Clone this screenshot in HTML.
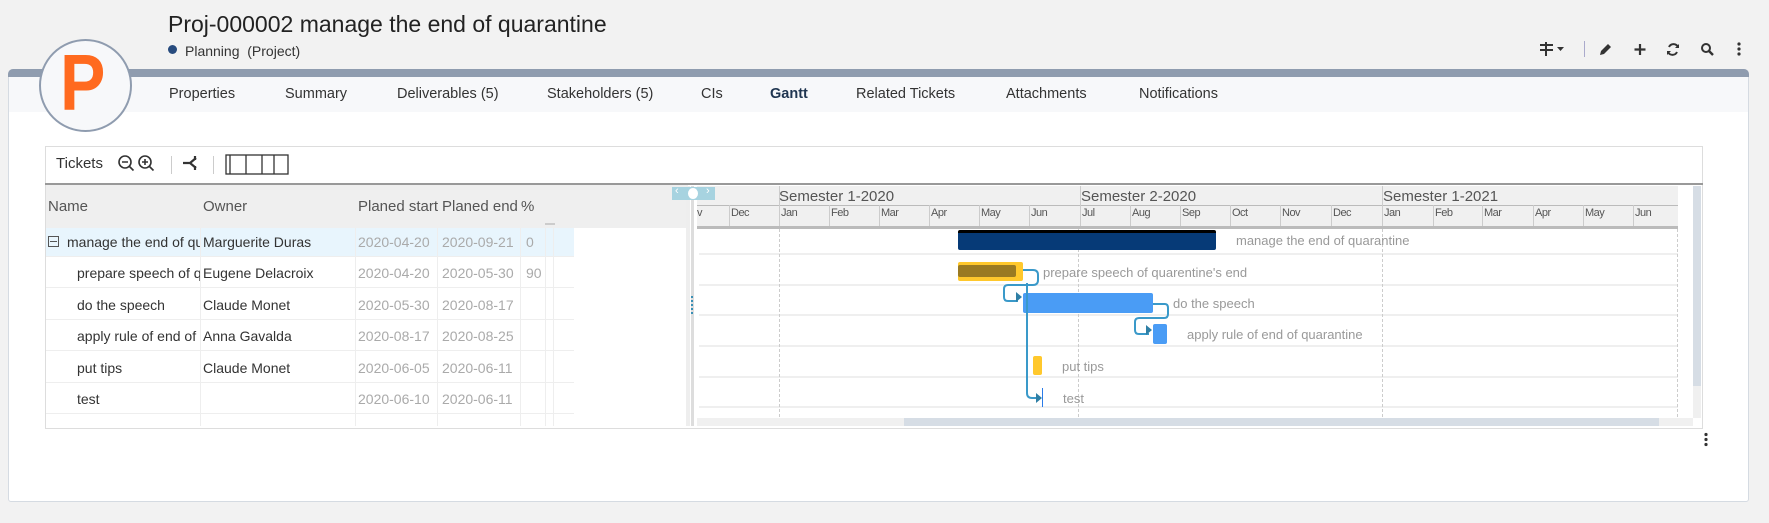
<!DOCTYPE html>
<html><head><meta charset="utf-8"><style>
*{margin:0;padding:0;box-sizing:border-box}
body{width:1769px;height:523px;background:#f2f2f2;font-family:"Liberation Sans",sans-serif;position:relative;overflow:hidden;color:#333}
.a{position:absolute}
.tab{position:absolute;top:86px;font-size:14.5px;color:#333}
.g{font-size:14px;position:absolute;white-space:nowrap;overflow:hidden}
.d{color:#aaa}
.hl{position:absolute;left:699px;width:979px;height:2px;background:#efefef}
.mo{position:absolute;top:207px;font-size:11px;color:#555;letter-spacing:-.5px}
.ml{position:absolute;top:205px;width:1px;height:21px;background:#ccc}
.sem{position:absolute;top:188px;font-size:15px;color:#555}
.lbl{position:absolute;font-size:13px;color:#999}
</style></head><body>
<div class="a" style="left:168px;top:11px;font-size:23px;color:#222">Proj-000002 manage the end of quarantine</div>
<div class="a" style="left:168px;top:45px;width:9px;height:9px;border-radius:50%;background:#274b7e"></div>
<div class="a" style="left:185px;top:43px;font-size:14px;color:#333">Planning&nbsp; (Project)</div>
<svg class="a" style="left:1535px;top:40px" width="225" height="18" viewBox="0 0 225 18">
<g fill="#333">
<rect x="5" y="4" width="13" height="2"/><rect x="5" y="9" width="13" height="2"/><rect x="10" y="2" width="2" height="14"/>
<path d="M22 7h7l-3.5 4z"/>
</g>
<rect x="49" y="1" width="1" height="16" fill="#aac"/>
<path d="M65 15l1-4 7-7 3 3-7 7z" fill="#333"/>
<path d="M105 4v11M99.5 9.5h11" stroke="#333" stroke-width="2.2"/>
<path d="M143 7a5 5 0 0 0-9 0M133 12a5 5 0 0 0 9 0" stroke="#333" stroke-width="2" fill="none"/><path d="M144 4v4h-4zM132 15v-4h4z" fill="#333"/>
<circle cx="171" cy="8" r="4" stroke="#333" stroke-width="2" fill="none"/><path d="M174 11l4 4" stroke="#333" stroke-width="2.4"/>
<circle cx="204" cy="4" r="1.6" fill="#333"/><circle cx="204" cy="9" r="1.6" fill="#333"/><circle cx="204" cy="14" r="1.6" fill="#333"/>
</svg>
<div class="a" style="left:8px;top:69px;width:1741px;height:433px;background:#fff;border:1px solid #d5dbe2;border-radius:5px 5px 3px 3px"></div>
<div class="a" style="left:8px;top:69px;width:1741px;height:8px;background:#8f9caf;border-radius:5px 5px 0 0"></div>
<div class="a" style="left:9px;top:77px;width:1739px;height:35px;background:#f7f8fa"></div>
<div class="tab" style="left:169px">Properties</div>
<div class="tab" style="left:285px">Summary</div>
<div class="tab" style="left:397px">Deliverables (5)</div>
<div class="tab" style="left:547px">Stakeholders (5)</div>
<div class="tab" style="left:701px">CIs</div>
<div class="tab" style="left:770px;font-weight:bold;color:#1f3550">Gantt</div>
<div class="tab" style="left:856px">Related Tickets</div>
<div class="tab" style="left:1006px">Attachments</div>
<div class="tab" style="left:1139px">Notifications</div>
<div class="a" style="left:39px;top:39px;width:93px;height:93px;border-radius:50%;background:#f7f8fa;border:2px solid #8f9caf"></div>
<div class="a" style="left:60px;top:38px;font-size:80px;line-height:90px;font-weight:bold;color:#ff6a1f;transform:scaleX(0.85);transform-origin:left">P</div>
<!-- gantt container -->
<div class="a" style="left:45px;top:146px;width:1658px;height:283px;border:1px solid #ddd;background:#fff"></div>
<div class="a" style="left:45px;top:183px;width:1658px;height:2px;background:#999"></div>
<div class="a" style="left:56px;top:155px;font-size:15px;color:#333">Tickets</div>
<svg class="a" style="left:116px;top:153px" width="180" height="24" viewBox="0 0 180 24">
<g stroke="#333" stroke-width="1.6" fill="none">
<circle cx="9" cy="9" r="6"/><path d="M13.5 13.5l4 4M6 9h6"/>
<circle cx="29" cy="9" r="6"/><path d="M33.5 13.5l4 4M26 9h6M29 6v6"/>
</g>
<rect x="55" y="3" width="1" height="18" fill="#ccc"/>
<path d="M67 10h8M80 5l-6 5 6 5M79 3v4M79 13v4" stroke="#333" stroke-width="2.2" fill="none"/>
<rect x="97" y="3" width="1" height="18" fill="#ccc"/>
<g stroke="#333" stroke-width="1.3" fill="none"><rect x="110" y="2" width="62" height="19"/><path d="M114 2v19M130 2v19M146 2v19M158 2v19"/></g>
</svg>
<div class="a" style="left:46px;top:185px;width:642px;height:43px;background:#efefef"></div>
<div class="g" style="left:48px;top:198px;font-size:15px;color:#555">Name</div>
<div class="g" style="left:203px;top:198px;font-size:15px;color:#555">Owner</div>
<div class="g" style="left:358px;top:198px;font-size:15px;color:#555;width:82px">Planed start</div>
<div class="g" style="left:442px;top:198px;font-size:15px;color:#555;width:81px">Planed end d</div>
<div class="g" style="left:521px;top:198px;font-size:15px;color:#555">%</div>
<div class="a" style="left:46px;top:228px;width:528px;height:28px;background:#e8f5fd"></div>
<div class="a" style="left:46px;top:256px;width:528px;height:1px;background:#eee"></div>
<div class="a" style="left:46px;top:287px;width:528px;height:1px;background:#eee"></div>
<div class="a" style="left:46px;top:319px;width:528px;height:1px;background:#eee"></div>
<div class="a" style="left:46px;top:350px;width:528px;height:1px;background:#eee"></div>
<div class="a" style="left:46px;top:382px;width:528px;height:1px;background:#eee"></div>
<div class="a" style="left:46px;top:413px;width:528px;height:1px;background:#eee"></div>
<div class="a" style="left:200px;top:228px;width:1px;height:198px;background:#eee"></div>
<div class="a" style="left:355px;top:228px;width:1px;height:198px;background:#eee"></div>
<div class="a" style="left:437px;top:228px;width:1px;height:198px;background:#eee"></div>
<div class="a" style="left:520px;top:228px;width:1px;height:198px;background:#eee"></div>
<div class="a" style="left:545px;top:228px;width:1px;height:198px;background:#eee"></div>
<div class="a" style="left:553px;top:228px;width:1px;height:198px;background:#eee"></div>
<div class="a" style="left:545px;top:223px;width:10px;height:2px;background:#ccc"></div>
<div class="a" style="left:48px;top:236px;width:11px;height:11px;border:1px solid #555"></div>
<div class="a" style="left:50px;top:241px;width:7px;height:1px;background:#555"></div>
<div class="g" style="left:67px;top:234px;width:133px">manage the end of quarantine</div>
<div class="g" style="left:203px;top:234px">Marguerite Duras</div>
<div class="g d" style="left:358px;top:234px">2020-04-20</div><div class="g d" style="left:442px;top:234px">2020-09-21</div><div class="g d" style="left:526px;top:234px">0</div>
<div class="g" style="left:77px;top:265px;width:123px">prepare speech of quarentine</div>
<div class="g" style="left:203px;top:265px">Eugene Delacroix</div>
<div class="g d" style="left:358px;top:265px">2020-04-20</div><div class="g d" style="left:442px;top:265px">2020-05-30</div><div class="g d" style="left:526px;top:265px">90</div>
<div class="g" style="left:77px;top:297px">do the speech</div>
<div class="g" style="left:203px;top:297px">Claude Monet</div>
<div class="g d" style="left:358px;top:297px">2020-05-30</div><div class="g d" style="left:442px;top:297px">2020-08-17</div>
<div class="g" style="left:77px;top:328px;width:123px">apply rule of end of quarantine</div>
<div class="g" style="left:203px;top:328px">Anna Gavalda</div>
<div class="g d" style="left:358px;top:328px">2020-08-17</div><div class="g d" style="left:442px;top:328px">2020-08-25</div>
<div class="g" style="left:77px;top:360px">put tips</div>
<div class="g" style="left:203px;top:360px">Claude Monet</div>
<div class="g d" style="left:358px;top:360px">2020-06-05</div><div class="g d" style="left:442px;top:360px">2020-06-11</div>
<div class="g" style="left:77px;top:391px">test</div>
<div class="g d" style="left:358px;top:391px">2020-06-10</div><div class="g d" style="left:442px;top:391px">2020-06-11</div>
<div class="a" style="left:686px;top:186px;width:4px;height:240px;background:#eee"></div>
<div class="a" style="left:691px;top:186px;width:3px;height:240px;background:#ddd"></div>
<div class="a" style="left:691px;top:296px;width:2px;height:18px;background:repeating-linear-gradient(#3a8fb5 0 2px,transparent 2px 4px)"></div>
<!-- chart header -->
<div class="a" style="left:697px;top:186px;width:981px;height:40px;background:#f0f0f0"></div>
<div class="a" style="left:697px;top:205px;width:981px;height:1px;background:#bbb"></div>
<div class="a" style="left:697px;top:226px;width:981px;height:3px;background:#bbb"></div>
<div class="a" style="left:779px;top:186px;width:1px;height:20px;background:#ccc"></div>
<div class="a" style="left:1080px;top:186px;width:1px;height:20px;background:#ccc"></div>
<div class="a" style="left:1382px;top:186px;width:1px;height:20px;background:#ccc"></div>
<div class="sem" style="left:779px">Semester 1-2020</div>
<div class="sem" style="left:1081px">Semester 2-2020</div>
<div class="sem" style="left:1383px">Semester 1-2021</div>
<div class="mo" style="left:697px">v</div>
<div class="ml" style="left:729px"></div><div class="mo" style="left:731px">Dec</div>
<div class="ml" style="left:779px"></div><div class="mo" style="left:781px">Jan</div>
<div class="ml" style="left:829px"></div><div class="mo" style="left:831px">Feb</div>
<div class="ml" style="left:879px"></div><div class="mo" style="left:881px">Mar</div>
<div class="ml" style="left:929px"></div><div class="mo" style="left:931px">Apr</div>
<div class="ml" style="left:979px"></div><div class="mo" style="left:981px">May</div>
<div class="ml" style="left:1029px"></div><div class="mo" style="left:1031px">Jun</div>
<div class="ml" style="left:1080px"></div><div class="mo" style="left:1082px">Jul</div>
<div class="ml" style="left:1130px"></div><div class="mo" style="left:1132px">Aug</div>
<div class="ml" style="left:1180px"></div><div class="mo" style="left:1182px">Sep</div>
<div class="ml" style="left:1230px"></div><div class="mo" style="left:1232px">Oct</div>
<div class="ml" style="left:1280px"></div><div class="mo" style="left:1282px">Nov</div>
<div class="ml" style="left:1331px"></div><div class="mo" style="left:1333px">Dec</div>
<div class="ml" style="left:1382px"></div><div class="mo" style="left:1384px">Jan</div>
<div class="ml" style="left:1433px"></div><div class="mo" style="left:1435px">Feb</div>
<div class="ml" style="left:1482px"></div><div class="mo" style="left:1484px">Mar</div>
<div class="ml" style="left:1533px"></div><div class="mo" style="left:1535px">Apr</div>
<div class="ml" style="left:1583px"></div><div class="mo" style="left:1585px">May</div>
<div class="ml" style="left:1633px"></div><div class="mo" style="left:1635px">Jun</div>
<div class="a" style="left:672px;top:187px;width:43px;height:13px;background:#a7d3e0"></div>
<div class="a" style="left:688px;top:188px;width:10px;height:11px;border-radius:50%;background:#fff"></div>
<div class="a" style="left:675px;top:185px;font-size:11px;color:#fff">‹</div><div class="a" style="left:706px;top:185px;font-size:11px;color:#fff">›</div>
<div class="hl" style="top:253px"></div><div class="hl" style="top:284px"></div><div class="hl" style="top:314px"></div><div class="hl" style="top:345px"></div><div class="hl" style="top:376px"></div><div class="hl" style="top:406px"></div>
<div class="a" style="left:779px;top:229px;height:188px;border-left:1px dashed #ccc"></div>
<div class="a" style="left:1078px;top:229px;height:188px;border-left:1px dashed #ccc"></div>
<div class="a" style="left:1382px;top:229px;height:188px;border-left:1px dashed #ccc"></div>
<div class="a" style="left:1677px;top:229px;height:188px;border-left:1px dashed #ccc"></div>
<div class="a" style="left:1693px;top:186px;width:8px;height:232px;background:#f0f0f0"></div>
<div class="a" style="left:1693px;top:186px;width:8px;height:200px;background:#d6dde5"></div>
<div class="a" style="left:697px;top:418px;width:996px;height:8px;background:#f0f0f0"></div>
<div class="a" style="left:904px;top:418px;width:755px;height:8px;background:#d6dde5"></div>
<div class="a" style="left:958px;top:230px;width:258px;height:20px;background:#063a77;border-top:3px solid #000;border-radius:2px"></div>
<div class="lbl" style="left:1236px;top:233px">manage the end of quarantine</div>
<div class="a" style="left:958px;top:262px;width:65px;height:19px;background:#ffc82c;border-radius:2px"></div>
<div class="a" style="left:958px;top:265px;width:58px;height:12px;background:#9a7a22;border-radius:2px"></div>
<div class="lbl" style="left:1043px;top:265px">prepare speech of quarentine's end</div>
<div class="a" style="left:1023px;top:293px;width:130px;height:20px;background:#4a9cf5;border-radius:2px"></div>
<div class="lbl" style="left:1173px;top:296px">do the speech</div>
<div class="a" style="left:1153px;top:324px;width:14px;height:20px;background:#4a9cf5;border-radius:2px"></div>
<div class="lbl" style="left:1187px;top:327px">apply rule of end of quarantine</div>
<div class="a" style="left:1033px;top:356px;width:9px;height:19px;background:#ffc82c;border-radius:2px"></div>
<div class="lbl" style="left:1062px;top:359px">put tips</div>
<div class="a" style="left:1042px;top:388px;width:1px;height:19px;background:#2a7be8"></div>
<div class="lbl" style="left:1063px;top:391px">test</div>
<svg class="a" style="left:940px;top:225px" width="260" height="190" viewBox="0 0 260 190">
<g stroke="#3a99c9" stroke-width="2" fill="none">
<path d="M83 45h2" stroke-dasharray="2 1"/>
<path d="M85 45h8q5 0 5 5v5q0 5-5 5h-25q-4 0-4 4v8q0 4 4 4h10"/>
<path d="M87 58v110q0 5 5 5h8"/>
<path d="M213 79h12q3 0 3 4v6q0 4-4 4h-25q-4 0-4 4v8q0 4 4 4h10"/>
</g>
<g fill="#2f7fa5"><path d="M82 72l-6-5v10z"/><path d="M212 105l-6-5v10z"/><path d="M102 173l-6-5v10z"/></g>
</svg>
<svg class="a" style="left:1703px;top:432px" width="6" height="16"><circle cx="3" cy="2.5" r="1.6" fill="#333"/><circle cx="3" cy="7.5" r="1.6" fill="#333"/><circle cx="3" cy="12.5" r="1.6" fill="#333"/></svg>
</body></html>
